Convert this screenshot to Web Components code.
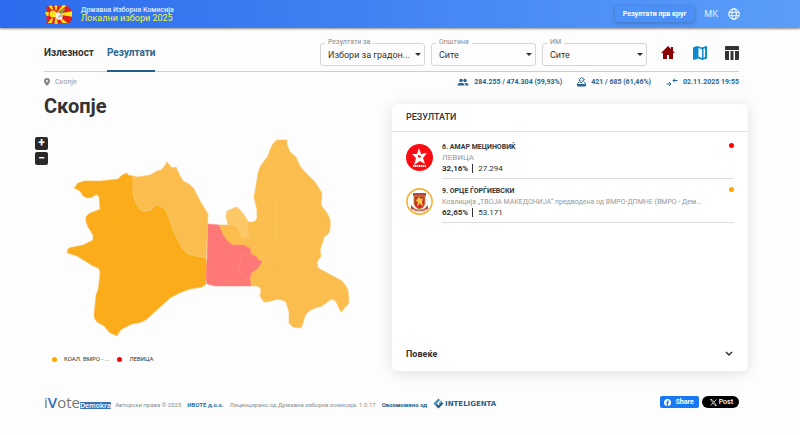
<!DOCTYPE html>
<html lang="mk">
<head>
<meta charset="utf-8">
<title>Локални избори 2025</title>
<style>
body { margin: 0; min-height: 100vh; background: #fdfdfd; color: #333; font-family: Roboto, "Noto Sans", sans-serif; font-size: 8px; }
</style>
</head>
<body>
<election-page></election-page>

<script>
function define(name, html, setup) {
  const template = document.createElement('template');
  template.innerHTML = html;
  customElements.define(name, class extends HTMLElement {
    connectedCallback() {
      if (this.shadowRoot) return;
      const root = this.attachShadow({ mode: 'open' });
      root.append(template.content.cloneNode(true));
      if (setup) setup(this, root);
    }
  });
}

define('site-header', `
<style>
:host { display: flex; align-items: center; box-sizing: border-box; height: 28px; padding: 0 60px 0 44px; color: #fff;
  background: linear-gradient(90deg, #2c6bed, #5a9ef9); box-shadow: 0 1px 2px rgba(0,0,0,.45); position: relative; }
.brand { display: flex; align-items: center; gap: 8px; flex: 1; }
.brand svg { width: 29px; height: 22px; }
.name { font-size: 7px; line-height: 8px; font-weight: 500; color: #e6eeff; }
.sub { font-size: 9px; line-height: 9px; color: #eef73a; font-weight: 400; }
nav { display: flex; align-items: center; gap: 10px; }
button { font: 700 7px/16px Roboto, sans-serif; color: #fff; background: #4a90f7; border: 0; border-radius: 3px; padding: 0 8px; box-shadow: 0 1px 4px rgba(0,0,0,.25); }
a { color: #e6efff; text-decoration: none; font-size: 9px; }
nav svg { width: 12px; height: 12px; display: block; }
</style>
<div class="brand">
  <svg viewBox="0 0 29 22" aria-hidden="true">
    <defs><clipPath id="c"><path d="M2 4 9 2l6 1 5-1 5 2 3 4v9l-3 3H17l-4 1-5-1H2l2-3-2-1 1-3-2-3 2-2z"/></clipPath></defs>
    <g clip-path="url(#c)">
      <rect width="29" height="22" fill="#e0201e"/>
      <path fill="#ffe21a" d="M11 11 0 8v6zM11 11 2 0h5zM11 11 2 22h5zM12 10 10 0h4zM12 12l-2 10h4zM12 11 20 0h6zM12 11l8 11h6zM12 11 29 8v6z"/>
      <circle cx="9" cy="11" r="4.500" fill="#e0201e"/><circle cx="9" cy="11" r="3.500" fill="#ffe21a"/>
    </g>
    <path fill="#f4f1ea" d="m12 10 2-1 3 2 2 1-1 4-4 1-3-3z"/>
    <path fill="#8d9a3c" d="m14 9 6-4 1 2-4 4z"/><path fill="#b8b4a2" d="m14 13 4-2 1 2-4 2z"/>
  </svg>
  <div><div class="name">Државна Изборна Комисија</div><div class="sub">Локални избори 2025</div></div>
</div>
<nav><button type="button">Резултати прв круг</button><a href="#">МК</a>
<svg viewBox="0 0 24 24" fill="none" stroke="#fff" stroke-width="2"><circle cx="12" cy="12" r="10.500"/><ellipse cx="12" cy="12" rx="4.500" ry="10.500"/><path d="M2 8.500h20M2 15.500h20"/></svg></nav>
`);

define('select-field', `
<style>
:host { display: block; position: relative; flex: 0 0 105px; }
label { position: absolute; left: 5px; top: -5px; padding: 0 3px; background: #fdfdfd; color: #8c8c8c; font-size: 7px; line-height: 8px; z-index: 1; }
select { appearance: none; display: block; width: 100%; height: 23px; padding: 1px 12px 0 7px; margin: 0; border: 1px solid #d6d6d6; border-radius: 3px; background: transparent; color: #333; font: 400 9px Roboto, sans-serif; text-overflow: ellipsis; }
svg { position: absolute; right: 4px; top: 10px; width: 6px; height: 3px; pointer-events: none; }
</style>
<label for="s"></label><select id="s"><option></option></select>
<svg viewBox="0 0 6 3"><path d="M0 0h6L3 3z" fill="#333"/></svg>
`, (el, root) => {
  root.querySelector('label').textContent = el.getAttribute('label');
  root.querySelector('option').textContent = el.getAttribute('value');
});

define('nav-bar', `
<style>
:host { display: flex; align-items: flex-end; justify-content: space-between; height: 43px; margin-right: 9px; border-bottom: 1px solid #cdd0d0; }
.tabs { display: flex; gap: 13px; }
.tabs a { box-sizing: border-box; height: 29px; font-size: 10px; line-height: 20px; font-weight: 700; color: #333; text-decoration: none; border-bottom: 2px solid transparent; margin-bottom: -1px; }
.tabs a.on { color: #2a6490; border-color: #245d8a; }
.tools { display: flex; gap: 6px; align-items: center; padding-bottom: 5px; }
.icons { display: flex; gap: 16px; align-items: center; padding: 0 0 3px 7px; margin-right: -1px; }
.icons a { display: block; height: 16px; } .icons svg { width: 16px; height: 16px; display: block; }
</style>
<nav class="tabs"><a href="#">Излезност</a><a href="#" class="on">Резултати</a></nav>
<div class="tools">
<select-field label="Резултати за" value="Избори за градон..."></select-field>
<select-field label="Општина" value="Сите"></select-field>
<select-field label="ИМ" value="Сите"></select-field>
<div class="icons">
<a href="#" aria-label="Почетна"><svg viewBox="0 0 16 16"><path fill="#8b0000" d="M8 1 1 8h2v6h4v-4h2v4h4V8h2l-2-2V2h-2v2z"/></svg></a>
<a href="#" aria-label="Мапа"><svg viewBox="0 0 16 16"><path fill="#0d8bd0" fill-rule="evenodd" d="M1 2.500 5 1l5 1.500L14 1q1 0 1 1v11.500L10.500 15 6 13.500 2 15q-1 0-1-1zM6.500 3v8.700l3.500 1.200V4.200zM13 3.300l-1.500.700v8.800L13 12z"/></svg></a>
<a href="#" aria-label="Табела"><svg viewBox="0 0 16 16"><path fill="#333" d="M2 1h12q1 0 1 1v3H1V2q0-1 1-1zM1 6h4v9H2q-1 0-1-1zM6.500 6h3v9h-3zM11 6h4v8q0 1-1 1h-3z"/></svg></a>
</div></div>
`);

define('status-row', `
<style>
:host { display: flex; justify-content: space-between; align-items: center; height: 20px; margin-right: 9px; }
.place { display: flex; align-items: center; gap: 5px; color: #999; font-size: 7px; }
.place svg { width: 6px; height: 8px; }
.stats { display: flex; gap: 15px; color: #2a6490; font: 700 7px Roboto, sans-serif; }
.stats span { display: flex; align-items: center; gap: 5px; }
.stats svg { width: 12px; height: 10px; } .stats span:nth-child(2) svg { width: 9px; }
</style>
<div class="place"><svg viewBox="0 0 6 8"><path fill="#858585" fill-rule="evenodd" d="M3 0a3 3 0 0 1 3 3c0 2-3 5-3 5S0 5 0 3a3 3 0 0 1 3-3zm0 2a1 1 0 1 0 0 2 1 1 0 0 0 0-2z"/></svg>Скопје</div>
<div class="stats">
<span><svg viewBox="0 0 22 20" fill="currentColor"><circle cx="7" cy="7" r="3.500"/><circle cx="15" cy="7" r="3.500"/><path d="M0 16c0-3 3-4 7-4s7 1 7 4v1H0zM15.500 12c4 0 6.500 1 6.500 4v1h-6v-1c0-2-1-3-2-4z"/></svg>284.255 / 474.304 (59,93%)</span>
<span><svg viewBox="0 0 18 20"><path d="M4 10 1 13v5h16v-5l-3-3" fill="none" stroke="currentColor" stroke-width="2"/><path d="M1 14h16v4H1z" fill="currentColor"/><path d="m4 6 5-5 6 4-5 6H7z" fill="none" stroke="currentColor" stroke-width="2"/><path d="m7 6 2 2 3-3" fill="none" stroke="currentColor"/></svg>421 / 685 (61,46%)</span>
<span><svg viewBox="0 0 22 20"><path d="M0 14h9M5 10l4 4-4 4M22 7h-9M17 3l-4 4 4 4" fill="none" stroke="currentColor" stroke-width="2"/></svg>02.11.2025 19:55</span>
</div>
`);

define('region-map', `
<style>
:host { display: block; min-width: 0; }
h1 { margin: 0; font-size: 20px; line-height: 28px; color: #333; }
.map { display: flex; align-items: flex-start; margin: 17px 42px 0 -9px; gap: 18px; }
.zoom { display: grid; gap: 2px; }
.zoom button { width: 13px; height: 13px; padding: 0; border: 0; border-radius: 2px; background: #292929; color: #fff; font: 700 12px/13px Roboto, sans-serif; }
.map > svg { flex: 1; min-width: 0; display: block; margin-top: 1px; }
ul { display: flex; gap: 8px; margin: 18px 0 0 8px; padding: 0; list-style: none; font-size: 6px; line-height: 8px; color: #333; }
li { display: flex; align-items: center; gap: 7px; }
i { width: 5px; height: 5px; border-radius: 50%; background: #ffa500; } li + li i { background: red; }
</style>
<h1>Скопје</h1>
<div class="map">
<div class="zoom"><button type="button" aria-label="Зголеми">+</button><button type="button" aria-label="Намали">−</button></div>
<svg viewBox="66 138 284 199" stroke-linejoin="round" stroke="#fcc563" stroke-width="0.600">
<path fill="#fbac1a" d="M74 188 78 183Q84 180 92 181L100 181 118 179 122 175 127 173 128 175 133 176V192Q134 200 138 207 141 212 145 211 150 211 152 209L156 205Q159 205 162 207 166 209 167 212L173 230 178 240Q182 250 188 254L197 256 206 258 207 265 206 284 202 287 190 289Q180 292 170 298L147 319Q143 322 138 323 130 324 128 326 121 329 120 331L117 336 110 333 104 326 97 322Q94 319 94 315L96 295 98 290 99 283 100 273Q100 269 98 268L93 266 85 261 77 256 67 253 68 249Q70 247 73 247L83 245 93 240 93 235 88 227Q85 222 86 217 88 213 93 212L100 209 99 197Q98 194 95 195 93 198 87 198L83 196 80 191Z"/>
<path fill="#fbbe4e" d="M133 176 138 177 150 175 157 171Q161 171 164 167L167 162 172 168 176 167 179 174 183 181Q191 184 194 189L200 201 208 214 207 237 206 258 197 256 188 254Q182 250 178 240L173 230 167 212Q166 209 162 207 159 205 156 205L152 209Q148 211 145 211 141 212 138 207 134 200 133 192Z"/>
<path fill="#fbbe4e" d="M219 225 228 225 248 222Q256 223 257 218L257 210 254 197 257 180Q258 169 262 164L268 156 270 150Q273 142 277 140L287 140 287 145 290 152 296 157 300 166 304 171 315 182 322 193 321 205Q329 215 330 220 331 230 328 234L324 237 323 241 320 250 321 256 317 262 318 268 342 281Q347 287 348 290L349 303 341 312 336 302Q333 298 330 300L322 306Q308 309 305 316L303 323 301 328 293 327 289 323 289 312 286 302Q281 298 274 300 270 302 264 302L260 296 261 290Q260 285 251 286L240 280 220 250Z"/>
<path fill="#fcc765" d="m226 217 1-6 10-4q9 9 11 15v8l2 8h-8l-5-11-9-3z"/>
<path fill="#ff7878" stroke="#ff8c78" d="M208 224 219 225 223 235Q228 243 233 245L243 245 250 248 251 254 257 257 258 260 262 261 260 265 257 269 251 273 250 279 251 286 215 286 207 284 206 277 207 260Z"/>
<g fill="none"><path d="M304 171Q293 177 278 197 275 209 276 223L277 235Q277 245 269 246L252 247M262 247V260M262 263Q275 260 282 266L300 277Q320 285 325 290L330 300M257 270 270 274Q277 285 290 290L303 292 319 306"/><path stroke="#ff9182" d="M251 254H243L240 262 238 272 250 279"/></g>
</svg>
</div>
<ul><li><i></i>КОАЛ. ВМРО - ...</li><li><i></i>ЛЕВИЦА</li></ul>
`);

define('candidate-row', `
<style>
:host { display: flex; gap: 9px; min-height: 44px; align-items: flex-start; }
::slotted(svg) { flex: none; width: 27px; height: 27px; margin-top: 3px; }
.body { flex: 1; min-width: 0; height: 37px; border-bottom: 1px solid #ddd; display: flex; }
.text { flex: 1; min-width: 0; font-size: 8px; line-height: 10px; }
.text div { white-space: nowrap; overflow: hidden; text-overflow: ellipsis; }
.name { font-size: 7px; font-weight: 700; line-height: 12px; } .party { color: #999; line-height: 10px; }
.votes { line-height: 12px; } .votes b { border-right: 1px solid #333; padding-right: 4px; margin-right: 5px; }
i { width: 5px; height: 5px; border-radius: 50%; background: var(--dot); margin: 2px 0 0 6px; }
</style>
<slot></slot>
<div class="body"><div class="text"><div class="name"></div><div class="party"></div><div class="votes"><b></b><span></span></div></div><i></i></div>
`, (el, root) => {
  const put = (sel, key) => root.querySelector(sel).textContent = el.getAttribute(key);
  put('.name', 'name'); put('.party', 'party'); put('b', 'percent'); put('span', 'votes');
  if (el.hasAttribute('compact')) root.querySelector('.party').style.fontSize = '7px';
});

define('results-card', `
<style>
:host { display: flex; flex-direction: column; box-sizing: border-box; min-width: 0; min-height: 267px; margin-top: 12px; background: #fff; border-radius: 6px; box-shadow: 0 2px 14px rgba(0,0,0,.12); }
h2 { margin: 0; padding: 0 14px; font-size: 9px; line-height: 27px; font-weight: 500; border-bottom: 1px solid #e2e2e2; }
.list { flex: 1; padding: 9px 14px 0; }
.more { display: flex; justify-content: space-between; align-items: center; width: 100%; height: 34px; padding: 0 15px 0 14px; border: 0; background: none; color: #333; font: 700 9px Roboto, sans-serif; }
.more svg { width: 8px; height: 6px; }
</style>
<h2>РЕЗУЛТАТИ</h2>
<div class="list">
<candidate-row style="--dot:red" name="6. АМАР МЕЦИНОВИЌ" party="ЛЕВИЦА" percent="32,16%" votes="27.294">
<svg viewBox="0 0 27 27"><circle cx="13.500" cy="13.500" r="13.500" fill="#f90d12"/><path fill="#fff" d="m13 4 2 6 6-1-4 5 2 6-5-3-6 4 2-7-4-4h5z"/><path d="m12 11 3 1-1 2-2-1z" fill="#f90d12"/><path d="M7 22h13" stroke="#fff" stroke-width="2" stroke-dasharray="1.500 .500"/></svg></candidate-row>
<candidate-row compact style="--dot:#ffa500" name="9. ОРЦЕ ЃОРЃИЕВСКИ" party="Коалиција „ТВОЈА МАКЕДОНИЈА“ предводена од ВМРО-ДПМНЕ (ВМРО - Дем..." percent="62,65%" votes="53.171">
<svg viewBox="0 0 27 27"><circle cx="13.500" cy="13.500" r="12.600" fill="#fff" stroke="#f4b136" stroke-width="1.600"/><path d="M7 5h13v3H7z" fill="#b5483c"/><path d="M8 8h11v8q-1 4-5.500 5Q9 20 8 16z" fill="#d3262b" stroke="#b99a45"/><path d="m11 11 2-2 2 2 2-1-1 4 1 4-2-1-1-2-2 3h-1l1-4-2-1z" fill="#f6cc45"/><path d="m5 17 3 3q5 3 11 0l3-3v4q-8 5-17 0z" fill="#b5483c"/><path d="M7 21q6 3 13 0" stroke="#e9c9a3" stroke-width=".700" fill="none"/></svg></candidate-row>
</div>
<button class="more" type="button">Повеќе<svg viewBox="0 0 8 6"><path d="m1 1 3 3 3-3" fill="none" stroke="#333" stroke-width="1.500"/></svg></button>
`);

define('site-footer', `
<style>
:host { display: flex; justify-content: space-between; align-items: center; height: 24px; margin: 19px 9px 0 0; font-size: 6px; color: #8c8c8c; }
.left, .share, .brand, .int { display: flex; align-items: center; }
.left { gap: 6px; white-space: nowrap; }
.left > span, .left > a { padding-top: 5px; }
a { text-decoration: none; color: #1f77ae; font-weight: 700; }
.left .brand { padding: 0; align-items: flex-end; color: #777; margin-right: -2px; }
.brand span { font: 400 15px/16px "Open Sans", sans-serif; } .brand span b { color: #2b6fc0; font-weight: 600; }
.brand em { font: 600 7px/7px "Open Sans", sans-serif; color: #fff; background: #3972b5; padding: 0; margin-bottom: 1px; border-radius: 1px; }
.left .int { padding: 3px 0 0; font: 700 7px "DejaVu Sans", sans-serif; color: #286386; gap: 1px; }
.int svg { width: 11px; height: 11px; }
.share { gap: 3px; }
button { display: flex; align-items: center; gap: 4px; height: 12px; border: 0; color: #fff; font: 700 7px Roboto, sans-serif; padding: 0 5px 0 4px; background: #1877f2; border-radius: 2px; }
button svg { width: 7px; height: 7px; }
.x { background: #000; border-radius: 6px; font-weight: 500; font-size: 7px; padding: 0 6px 0 8px; gap: 2px; }
</style>
<div class="left">
<a class="brand" href="#"><span>i<b>V</b>ote</span><em>Demokra</em></a>
<span>Авторски права © 2025</span><a href="#">ИВОТЕ д.о.о.</a><span>Лиценцирано од Државна изборна комисија. 1.0.17</span>
<a href="#" style="color:#245d8a">Овозможено од</a>
<a class="int" href="#"><svg viewBox="0 0 22 22"><path d="M11 1 1 11l5 5 3-3-2-2 7-7z" fill="#3a8bb0"/><path d="m6 16 5 5 10-10-4-3-6 7-3-3z" fill="#285a7b"/><path d="m11 11 5-6 2 2-5 6z" fill="#5aa3c0"/></svg>INTELIGENTA</a>
</div>
<div class="share">
<button type="button"><svg viewBox="0 0 14 14"><circle cx="7" cy="7" r="7" fill="#fff"/><path d="M6 14V9H4V7h2V5q0-3 4-2v2H9Q8 5 8 6v1h2l-.500 2H8v5z" fill="#1877f2"/></svg>Share</button>
<button type="button" class="x"><svg viewBox="0 0 14 14"><path d="M1 1h3l9 12h-3zM13 1 8 6M6 8l-5 5" fill="none" stroke="#fff" stroke-width="1.400"/></svg>Post</button>
</div>
`);

define('election-page', `
<style>
:host { display: block; }
main { padding: 0 52px 0 44px; }
.cols { display: grid; grid-template-columns: 348fr 356fr; }
</style>
<site-header></site-header>
<main><nav-bar></nav-bar><status-row></status-row>
<div class="cols"><region-map></region-map><results-card></results-card></div>
<site-footer></site-footer></main>
`);
</script>
</body>
</html>
